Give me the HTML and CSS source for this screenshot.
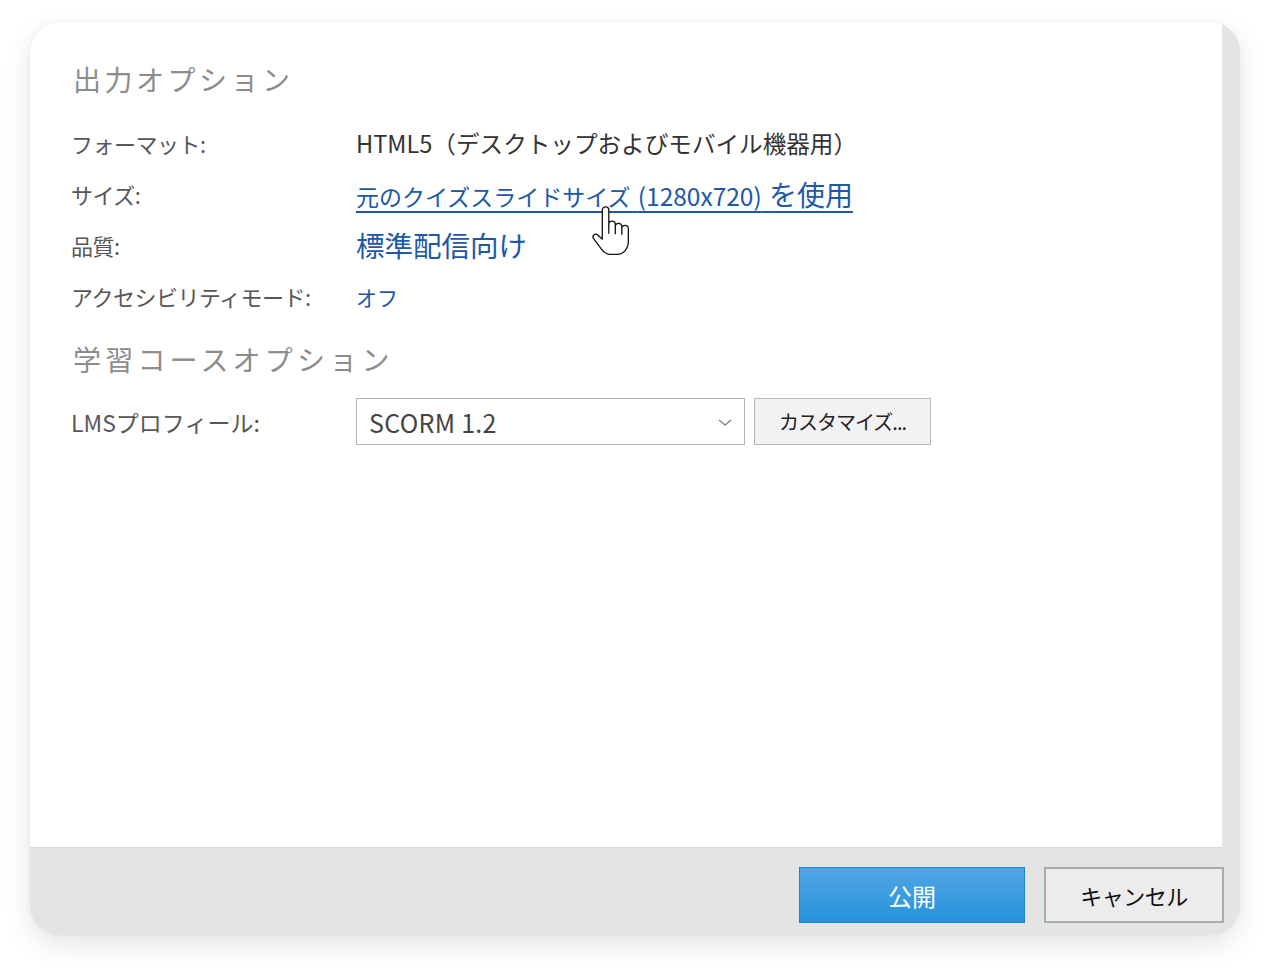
FILE: index.html
```html
<!DOCTYPE html>
<html lang="ja">
<head>
<meta charset="utf-8">
<title>公開</title>
<link rel="stylesheet" href="styles.css">
</head>
<body>
<div class="window">
  <div class="content">
    <h2 class="section-title">出力オプション</h2>
    <div class="grid">
      <div class="label">フォーマット:</div>
      <div class="value plain">HTML5（デスクトップおよびモバイル機器用）</div>
      <div class="label">サイズ:</div>
      <div class="value"><a class="link underline">元のクイズスライドサイズ <span class="small">(1280x720)</span> <span class="kanji">を使用</span></a></div>
      <div class="label">品質:</div>
      <div class="value"><a class="link big">標準配信向け</a></div>
      <div class="label">アクセシビリティモード:</div>
      <div class="value"><a class="link off">オフ</a></div>
    </div>
    <h2 class="section-title second">学習コースオプション</h2>
    <div class="lms-row">
      <div class="label lms">LMSプロフィール:</div>
      <div class="controls">
        <div class="select">
          <span>SCORM 1.2</span>
          <svg class="chev" width="14" height="8" viewBox="0 0 14 8"><path d="M1 1 L7 6 L13 1" fill="none" stroke="#8a8a8a" stroke-width="1.5"/></svg>
        </div>
        <div class="btn-custom">カスタマイズ...</div>
      </div>
    </div>
    <svg class="cursor" width="38" height="50" viewBox="0 0 17.5 22.5">
      <path d="M5.2,1.6 a1.5,1.5 0 0 1 3,0 V8.2 a1.5,1.5 0 0 1 3,0 V9.2 a1.5,1.5 0 0 1 3,0 V10.2 a1.5,1.5 0 0 1 3,0 V16 c0,3.4 -2.2,6 -5.2,6 H9 c-2,0 -3.2,-1 -4.2,-2.4 L1.2,14.8 c-0.9,-1.3 0.6,-2.7 1.9,-1.7 L5.2,15 Z" fill="#fff" stroke="#111" stroke-width="0.6" stroke-linejoin="round"/>
      <path d="M8.2,8.2 V12.5 M11.2,9.2 V12.8 M14.2,10.2 V13" stroke="#111" stroke-width="0.6" fill="none"/>
    </svg>
  </div>
  <div class="footer">
    <div class="btn-primary">公開</div>
    <div class="btn-cancel">キャンセル</div>
  </div>
</div>
</body>
</html>
```

FILE: styles.css
```css
* { box-sizing: border-box; }
html, body { margin: 0; padding: 0; background: #ffffff; }
body {
  padding: 22px 30px 0 30px;
  font-family: "Noto Sans CJK JP", "Noto Sans", sans-serif;
  width: 1270px;
  height: 974px;
  overflow: hidden;
}
.window {
  width: 1210px;
  height: 913px;
  border-radius: 30px;
  background: #e4e4e4;
  overflow: hidden;
  display: flex;
  flex-direction: column;
  box-shadow: 0 10px 28px rgba(0, 0, 0, 0.10), 0 0 6px rgba(0, 0, 0, 0.04);
}
.content {
  position: relative;
  background: #ffffff;
  margin-right: 18px;
  height: 826px;
  padding: 37px 0 0 41px;
  border-bottom: 1px solid #d9d9d9;
}
.section-title {
  margin: 0 0 0 2px;
  font-weight: 400;
  font-size: 28px;
  line-height: 40px;
  letter-spacing: 3.5px;
  color: #8c8c8c;
}
.section-title.second { margin-top: 18px; letter-spacing: 4.2px; }
.grid {
  display: grid;
  grid-template-columns: 285px auto;
  grid-auto-rows: 51px;
  align-items: center;
  margin-top: 18px;
}
.label {
  font-size: 22px;
  color: #575757;
  letter-spacing: -0.5px;
}
.label.lms { font-size: 23px; letter-spacing: 0; }
.value { font-size: 23px; color: #333; }
.value.plain { font-size: 23.6px; letter-spacing: 0; }
.link { color: #2058a8; text-decoration: none; }
.link.underline {
  text-decoration: underline;
  text-underline-offset: 5px;
  text-decoration-thickness: 1.5px;
  word-spacing: 2px;
}
.link.big { font-size: 28.5px; }
.link.off { font-size: 21px; }
.small { font-size: 24.5px; }
.kanji { font-size: 28px; }
.lms-row {
  display: grid;
  grid-template-columns: 285px auto;
  align-items: center;
  margin-top: 19px;
}
.controls { display: flex; gap: 9px; }
.select {
  width: 389px;
  height: 47px;
  border: 1px solid #b5b5b5;
  background: #fff;
  display: flex;
  align-items: center;
  justify-content: space-between;
  padding: 0 12px 0 12px;
  font-size: 25px;
  letter-spacing: 0.3px;
  color: #444;
}
.chev { margin-top: 2px; }
.btn-custom {
  width: 177px;
  height: 47px;
  border: 1px solid #b9b9b9;
  background: #f2f2f2;
  display: flex;
  align-items: center;
  justify-content: center;
  font-size: 20px;
  color: #222;
  letter-spacing: -1px;
}
.cursor {
  position: absolute;
  left: 561px;
  top: 184px;
}
.footer {
  flex: 1;
  display: flex;
  justify-content: flex-end;
  align-items: flex-start;
  gap: 19px;
  padding: 19px 16px 0 0;
}
.btn-primary {
  width: 226px;
  height: 56px;
  background: linear-gradient(#52a5e5, #2593db);
  border: 1px solid #1c86d0;
  color: #fff;
  font-size: 24px;
  display: flex;
  align-items: center;
  justify-content: center;
}
.btn-cancel {
  width: 180px;
  height: 56px;
  background: #ececec;
  border: 2px solid #ababab;
  color: #111;
  font-size: 22px;
  display: flex;
  align-items: center;
  justify-content: center;
  letter-spacing: -0.5px;
}
```
